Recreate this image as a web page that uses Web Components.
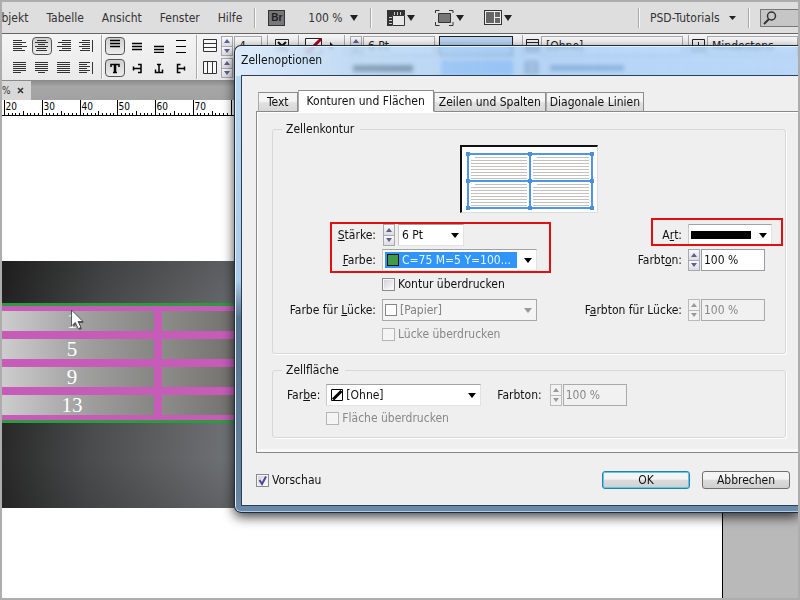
<!DOCTYPE html>
<html lang="de">
<head>
<meta charset="utf-8">
<title>Zellenoptionen</title>
<style>
  html, body { margin: 0; height: 100%; }
  body { font: 12px/16px "DejaVu Sans Condensed", "Noto Sans", sans-serif; color: #111; background: #adadad; }
</style>
</head>
<body>
<app-window></app-window>

<script>
const define = (name, html, setup) => {
  const template = document.createElement('template');
  template.innerHTML = html;
  customElements.define(name, class extends HTMLElement {
    connectedCallback() {
      if (this.shadowRoot) return;
      this.attachShadow({ mode: 'open' }).append(template.content.cloneNode(true));
      if (setup) setup(this, this.shadowRoot);
    }
  });
};

/* ---------- icons ---------- */
const hLines = list => list.map(([x, y, w]) => `<path d="M${x} ${y}.5h${w}" stroke="#333"/>`).join('');
const paragraph = (xs, ws, extra = '') =>
  `<svg width="16" height="14">${hLines(ws.map((w, i) => [xs[i], 1 + i * 2, w]))}${extra}</svg>`;
const edge = '<path d="M14.500 1v12" stroke="#333"/>';
const ICONS = {
  left: paragraph([1, 1, 1, 1, 1, 1], [9, 13, 9, 14, 9, 12]),
  center: paragraph([3, 1, 4, 1, 3, 2], [9, 13, 7, 13, 9, 11]),
  right: paragraph([6, 2, 6, 1, 6, 3], [9, 13, 9, 14, 9, 12]),
  spine: paragraph([4, 1, 4, 1, 4, 2], [8, 11, 8, 11, 8, 10], edge),
  jleft: paragraph([1, 1, 1, 1, 1, 1], [13, 13, 13, 13, 13, 8]),
  jcenter: paragraph([1, 1, 1, 1, 1, 4], [13, 13, 13, 13, 13, 7]),
  jfull: paragraph([1, 1, 1, 1, 1, 1], [13, 13, 13, 13, 13, 13]),
  jspine: paragraph([1, 1, 1, 1, 1, 1], [11, 8, 11, 8, 11, 8], edge),
  top: '<svg width="16" height="14"><path d="M3 1.500h10M3 4.500h10M3 7.500h10" stroke="#000" stroke-width="1.500"/></svg>',
  middle: '<svg width="16" height="14"><path d="M3 4.500h10M3 7.500h10M3 10.500h10" stroke="#000" stroke-width="1.500"/></svg>',
  bottom: '<svg width="16" height="14"><path d="M3 7.500h10M3 10.500h10M3 13.500h10" stroke="#000" stroke-width="1.500"/></svg>',
  spread: '<svg width="16" height="14"><path d="M3 1.500h10M3 7.500h10M3 13.500h10" stroke="#000"/></svg>',
  t0: '<svg width="16" height="14"><path d="M4 6V3.500h8V6M6 11.500h4" fill="none" stroke="#000" stroke-width="1.500"/><path d="M8 3v9" stroke="#000" stroke-width="2.500"/></svg>',
  t90: '<svg width="16" height="14"><path d="M4 7.500h8M9 3.500h3v8h-3M4.500 5.500v4" fill="none" stroke="#000" stroke-width="1.500"/></svg>',
  t180: '<svg width="16" height="14"><path d="M8 3v8M4.500 8.500v3h7v-3M6 3.500h4" fill="none" stroke="#000" stroke-width="1.500"/></svg>',
  t270: '<svg width="16" height="14"><path d="M4 7.500h8M7.500 3.500h-3v8h3M11.500 5.500v4" fill="none" stroke="#000" stroke-width="1.500"/></svg>',
  rows: '<svg width="16" height="14"><path d="M1.500 .500h13v12h-13zM1.500 4.500h13M1.500 8.500h13" fill="#f8f8f8" stroke="#333"/></svg>',
  cols: '<svg width="16" height="14"><path d="M1.500 .500h13v12h-13zM5.500 .500v12M10.500 .500v12" fill="#f8f8f8" stroke="#333"/></svg>',
  cross: '<svg width="16" height="14"><path d="M1.500 .500h13v12h-13z" fill="#f8f8f8" stroke="#222"/><path d="M4 3l8 8M12 3l-8 8" stroke="#111" stroke-width="2"/></svg>',
  none: '<svg width="17" height="16"><path d="M.500 .500h16v15h-16z" fill="#fff" stroke="#222"/><path d="M2 15 16 1" stroke="#b00020" stroke-width="3"/></svg>',
  play: '<svg width="5" height="8"><path d="M0 0l4 4-4 4z" fill="#111"/></svg>',
  lines: '<svg width="13" height="14"><path d="M.500 .500h12v12h-12zM.500 3.500h12M.500 6.500h12M.500 9.500h12" fill="none" stroke="#222"/></svg>',
  inset: '<svg width="13" height="14"><path d="M.500 .500h12v12h-12zM3 6.500h8M6.500 3v8" fill="none" stroke="#222"/></svg>',
  caret: '<svg width="8" height="6"><path d="M0 0h8L4 6z" fill="#222"/></svg>',
  smallcaret: '<svg width="7" height="4"><path d="M0 0h7L3.500 4z" fill="#222"/></svg>',
  ruler: '<svg width="18" height="16"><path d="M0 0h18v5H5v11H0z" fill="#333"/><path d="M7.500 2v3M10.500 2v3M13.500 2v3M2 7.500h3M2 10.500h3M2 13.500h3" stroke="#ccc"/><path d="M5.500 5.500h12v10h-12z" fill="#e8e8e8" stroke="#333"/></svg>',
  screen: '<svg width="19" height="16"><path d="M.500 3V.500h4M14 .500h4V3M.500 12v3.500h4M14 15.500h4V12" fill="none" stroke="#333"/><path d="M3.500 3.500h12v9h-12z" fill="#777" stroke="#333"/></svg>',
  arrange: '<svg width="18" height="15"><path d="M0 0h18v15H0z" fill="#333"/><path d="M1 1h16v13H1z" fill="#eee"/><path d="M2 2h8v11H2zM11 2h5v5h-5zM11 8h5v5h-5z" fill="#666"/></svg>',
  search: '<svg width="14" height="14"><circle cx="8.500" cy="5" r="4" fill="none" stroke="#333" stroke-width="1.500"/><path d="M6 8l-5 5" stroke="#333" stroke-width="2"/></svg>',
  cursor: '<svg width="16" height="22"><path d="M3 3v15l3.500-3 3 6 2.500-1-3-6h5z" fill="#000" opacity=".45"/><path d="M1.500 1v16l3.800-3.500 3 6.200 2.700-1.300-3-5.900h5z" fill="#fff" stroke="#333" stroke-width=".800"/></svg>',
  preview: (() => {
    let rows = '';
    for (const x of [9, 71]) for (const y of [10, 37])
      for (let i = 0; i < 8; i++) rows += `<path d="M${x + (i ? 0 : 4)} ${y + .5 + i * 3}h${i ? 56 : 52}" stroke="#c4c0c0"/>`;
    let dots = '';
    for (const x of [4, 66, 128]) for (const y of [5, 32, 59]) dots += `<path d="M${x} ${y}h4v4h-4z" fill="#4a8fdc"/>`;
    return `<svg width="135" height="65">${rows}<path d="M6 7h124v54H6zM6 34h124M68 7v54" fill="none" stroke="#4f97e6" stroke-width="2"/>${dots}</svg>`;
  })()
};

define('ui-icon', `<style>:host{display:inline-flex;flex:none}svg{display:block}</style>`, (el, root) => {
  root.innerHTML += ICONS[el.getAttribute('name')];
});

/* ---------- small controls ---------- */
define('ui-separator', `<style>:host{display:block;flex:none;width:1px;height:20px;background:#a9a9a9;box-shadow:1px 0 #fafafa}</style>`);

define('tool-button', `<style>
  :host{display:block;flex:none}
  button{display:grid;place-items:center;box-sizing:border-box;width:20px;height:18px;padding:0;border:1px solid transparent;border-radius:4px;background:none}
  :host([pressed]) button{border-color:#555;background:linear-gradient(#cfcfcf,#ececec)}
  </style><button type="button"><slot></slot></button>`, (el, root) => {
  const button = root.querySelector('button');
  button.setAttribute('aria-label', el.getAttribute('label'));
  button.setAttribute('aria-pressed', el.hasAttribute('pressed'));
});

define('ui-spinner', `<style>
  :host{display:flex;flex-direction:column;flex:none;width:12px;height:22px}
  button{flex:1;display:grid;place-items:center;min-height:0;padding:0;border:1px solid #a8a8b0;background:linear-gradient(#fafafa,#dcdce2)}
  button+button{border-top:0}
  path{fill:#5c5f96}
  :host([disabled]) path{fill:#999}
  :host([disabled]) button{background:#f2f2f2;border-color:#bbb}
  </style>
  <button type="button" aria-label="Erhöhen"><svg width="6" height="4"><path d="M0 4 3 0l3 4z"/></svg></button>
  <button type="button" aria-label="Verringern"><svg width="6" height="4"><path d="M0 0h6L3 4z"/></svg></button>`, (el, root) => {
  if (el.hasAttribute('disabled')) root.querySelectorAll('button').forEach(b => b.disabled = true);
});

define('ui-select', `<style>
  :host{display:flex;box-sizing:border-box;height:22px;background:#fff;border:1px solid #e2e2e2;border-top-color:#a2a2a2;border-left-color:#c8c8c8;align-items:center;padding:0 4px 0 2px}
  .value{flex:1;min-width:0;display:flex;align-items:center;gap:2px;height:16px;margin-right:7px}
  select{appearance:none;flex:1;min-width:0;height:16px;padding:0 1px;border:0;margin:0;background:none;color:inherit;font:inherit;opacity:1}
  ::slotted(*){flex:none}
  svg{flex:none;pointer-events:none}
  path{fill:#000}
  :host([highlight]) .value{background:#2f95fb;color:#e8f6ff;padding-left:2px}
  :host([disabled]){background:#f4f4f4;color:#808080;border-color:#a8a8a8}
  :host([disabled]) path{fill:#999}
  </style>
  <span class="value"><slot name="swatch"></slot><select></select></span><svg width="8" height="5"><path d="M0 0h8L4 5z"/></svg>`, (el, root) => {
  const select = root.querySelector('select');
  select.setAttribute('aria-label', el.getAttribute('label'));
  select.append(new Option(el.getAttribute('value') || ''));
  select.disabled = el.hasAttribute('disabled');
});

define('ui-number', `<style>
  :host{display:flex;gap:1px}
  input{box-sizing:border-box;flex:1;width:0;min-width:0;height:22px;border:1px solid #9a9aa0;padding:0 2px;margin:0;font:inherit;color:inherit;background:#fff}
  :host([disabled]) input{background:#f1f1f1;color:#888;border-color:#aaa}
  </style><ui-spinner></ui-spinner><input type="text">`, (el, root) => {
  const input = root.querySelector('input');
  input.value = el.getAttribute('value');
  input.setAttribute('aria-label', el.getAttribute('label'));
  if (el.hasAttribute('disabled')) {
    input.disabled = true;
    root.querySelector('ui-spinner').setAttribute('disabled', '');
  }
});

define('ui-check', `<style>
  :host{display:block}
  label{display:flex;align-items:center;gap:3px;height:20px;white-space:nowrap}
  input{appearance:none;flex:none;box-sizing:border-box;width:13px;height:13px;margin:0;border:1px solid #8a8a8e;background:linear-gradient(135deg,#cfcfd4,#fff);box-shadow:inset 0 0 0 1px #f6f6f6}
  input:disabled{border-color:#b4b4b4;background:#f4f4f4}
  .box{display:grid}
  .box>*{grid-area:1/1}
  svg{display:none;pointer-events:none}
  :host([checked]) svg{display:block}
  :host([disabled]){color:#888}
  </style><label><span class="box"><input type="checkbox"><svg width="13" height="13"><path d="M3.500 6l2.500 4 4-7.500" fill="none" stroke="#4a4a9c" stroke-width="2"/></svg></span><span><slot></slot></span></label>`, (el, root) => {
  const input = root.querySelector('input');
  input.checked = el.hasAttribute('checked');
  input.disabled = el.hasAttribute('disabled');
});

define('ui-button', `<style>
  :host{display:block;width:88px}
  button{display:block;box-sizing:border-box;width:100%;height:18px;padding:0;border:1px solid #707070;border-radius:3px;font:inherit;line-height:16px;color:#111;background:linear-gradient(#f4f4f4 45%,#dcdcdc 50%,#d0d0d0)}
  :host([primary]) button{border-color:#2c7fa5;box-shadow:inset 0 0 0 1px #5cc8ec}
  </style><button type="button"><slot></slot></button>`);

define('ui-group', `<style>
  :host{display:block}
  fieldset{position:relative;margin:0;min-width:0;border:1px solid #d8d8d8;border-radius:3px;box-shadow:1px 1px #fff;padding:0 14px 9px 14px}
  legend{padding:0 6px 0 4px;margin-left:-5px;line-height:16px}
  </style><fieldset><legend></legend><slot></slot></fieldset>`, (el, root) => {
  root.querySelector('legend').textContent = el.getAttribute('label');
});

/* ---------- application bars ---------- */
define('menu-bar', `<style>
  :host{display:flex;align-items:center;height:31px;background:#dedede;border-bottom:1px solid #666;color:#333;white-space:nowrap;overflow:hidden}
  nav{display:flex;gap:18px;margin-left:-9px}
  a{color:inherit;text-decoration:none}
  ui-separator{margin:0 11px 0 12px}
  .bridge{box-sizing:border-box;width:17px;height:16px;margin-left:2px;padding:0;border:1px solid #333;background:#777;color:#222;font:bold 10px/12px "Liberation Sans",sans-serif}
  .drop{display:flex;align-items:center;gap:2px;padding:0;border:0;background:none;margin:0 20px 0 0;color:inherit;font:inherit}
  .drop.zoom{justify-content:space-between;margin:0 0 0 23px;width:50px}
  .drop.tools{margin-left:5px}
  .grow{flex:1}
  .drop.work{justify-content:space-between;width:86px;margin:0}
  .search{display:flex;align-items:center;box-sizing:border-box;width:38px;height:18px;border:1px solid #777;border-right:0;background:#c6c6c6;padding-left:2px}
  input{flex:1;width:0;min-width:0;border:0;padding:0;background:none}
  </style>
  <nav><a href="#">Objekt</a><a href="#">Tabelle</a><a href="#">Ansicht</a><a href="#">Fenster</a><a href="#">Hilfe</a></nav>
  <ui-separator></ui-separator>
  <button class="bridge" type="button">Br</button>
  <button class="drop zoom" type="button">100 % <ui-icon name="caret"></ui-icon></button>
  <ui-separator></ui-separator>
  <button class="drop tools" type="button" aria-label="Anzeigeoptionen"><ui-icon name="ruler"></ui-icon><ui-icon name="caret"></ui-icon></button>
  <button class="drop" type="button" aria-label="Bildschirmmodus"><ui-icon name="screen"></ui-icon><ui-icon name="caret"></ui-icon></button>
  <button class="drop" type="button" aria-label="Dokumente anordnen"><ui-icon name="arrange"></ui-icon><ui-icon name="caret"></ui-icon></button>
  <span class="grow"></span>
  <ui-separator></ui-separator>
  <button class="drop work" type="button">PSD-Tutorials <ui-icon name="smallcaret"></ui-icon></button>
  <ui-separator></ui-separator>
  <label class="search"><ui-icon name="search"></ui-icon><input type="search" aria-label="Suche"></label>`);

define('control-bar', `<style>
  :host{display:grid;grid-template-rows:22px 22px;align-content:center;height:46px;background:linear-gradient(#f4f4f4,#eaeaea);border-bottom:1px solid #8a8a8a;overflow:hidden}
  .row{display:flex;align-items:center;gap:2px;padding-left:8px;white-space:nowrap;color:#222}
  ui-separator{height:22px;margin:0 1px 0 3px}
  .field{box-sizing:border-box;height:20px;border:1px solid #aaa;background:#f6f6f6;padding:1px 4px;flex:none}
  .w28{width:28px}.w72{width:72px}.w142{width:142px}.grow{flex:1}
  .table{box-sizing:border-box;width:74px;height:20px;border:1px solid #222;background:#bcd6f4;flex:none;margin:0 4px 0 2px}
  .gap{margin:0 3px}
  .wide{margin:0 4px}
  .row>ui-spinner{height:20px;margin:0 -1px}
  .bar{width:60px;height:7px;background:#111;margin-left:89px;flex:none}
  .chip{width:72px;height:16px;background:#8ab4ee;margin-left:26px;flex:none}
  .dim{width:74px;height:6px;background:#5f7f9f;flex:none;margin-left:10px}
  .shift{margin-left:10px}
  </style>
  <div class="row">
    <tool-button label="Linksbündig"><ui-icon name="left"></ui-icon></tool-button>
    <tool-button label="Zentriert" pressed><ui-icon name="center"></ui-icon></tool-button>
    <tool-button label="Rechtsbündig"><ui-icon name="right"></ui-icon></tool-button>
    <tool-button label="Am Rücken ausrichten"><ui-icon name="spine"></ui-icon></tool-button>
    <ui-separator></ui-separator>
    <tool-button label="Oben" pressed><ui-icon name="top"></ui-icon></tool-button>
    <tool-button label="Mitte"><ui-icon name="middle"></ui-icon></tool-button>
    <tool-button label="Unten"><ui-icon name="bottom"></ui-icon></tool-button>
    <tool-button label="Blocksatz vertikal"><ui-icon name="spread"></ui-icon></tool-button>
    <ui-separator></ui-separator>
    <tool-button label="Zeilen"><ui-icon name="rows"></ui-icon></tool-button>
    <ui-spinner></ui-spinner>
    <span class="field w28">4</span>
    <ui-separator></ui-separator>
    <ui-icon class="gap" name="cross"></ui-icon>
    <ui-separator></ui-separator>
    <ui-icon class="gap" name="none"></ui-icon>
    <ui-icon class="gap" name="play"></ui-icon>
    <ui-separator class="wide"></ui-separator>
    <ui-spinner></ui-spinner>
    <span class="field w72">6 Pt</span>
    <span class="table"></span>
    <ui-separator></ui-separator>
    <ui-icon name="lines"></ui-icon>
    <span class="field w142">[Ohne]</span>
    <ui-separator></ui-separator>
    <ui-icon name="inset"></ui-icon>
    <span class="field grow">Mindestens</span>
  </div>
  <div class="row">
    <tool-button label="Blocksatz, letzte links"><ui-icon name="jleft"></ui-icon></tool-button>
    <tool-button label="Blocksatz, letzte zentriert"><ui-icon name="jcenter"></ui-icon></tool-button>
    <tool-button label="Blocksatz"><ui-icon name="jfull"></ui-icon></tool-button>
    <tool-button label="Vom Rücken weg"><ui-icon name="jspine"></ui-icon></tool-button>
    <ui-separator></ui-separator>
    <tool-button label="Text 0 Grad" pressed><ui-icon name="t0"></ui-icon></tool-button>
    <tool-button label="Text 90 Grad"><ui-icon name="t90"></ui-icon></tool-button>
    <tool-button label="Text 180 Grad"><ui-icon name="t180"></ui-icon></tool-button>
    <tool-button label="Text 270 Grad"><ui-icon name="t270"></ui-icon></tool-button>
    <ui-separator></ui-separator>
    <tool-button label="Spalten"><ui-icon name="cols"></ui-icon></tool-button>
    <ui-spinner></ui-spinner>
    <span class="field w28"></span>
    <span class="bar"></span>
    <span class="chip"></span>
    <ui-icon class="shift" name="lines"></ui-icon>
    <span class="dim"></span>
  </div>`);

define('document-tabs', `<style>
  :host{display:flex;height:19px;background:linear-gradient(#8e8e8e,#a6a6a6 30%,#a2a2a2)}
  .tab{display:flex;align-items:center;gap:6px;width:29px;box-sizing:border-box;background:#d8d8d8;color:#333;font-size:10px}
  button{border:0;padding:0;background:none;display:flex}
  </style><div class="tab"><span>%</span><button type="button" aria-label="Schließen"><svg width="7" height="7"><path d="M1 1l5 5M6 1 1 6" stroke="#333" stroke-width="1.500"/></svg></button></div>`);

define('ruler-strip', `<style>
  :host{display:block;height:17px;background:#fff;overflow:hidden}
  svg{display:block;width:100%;height:17px}
  text{font:10px "DejaVu Sans Condensed",sans-serif;fill:#000}
  </style><svg></svg>`, (el, root) => {
  let marks = '<path d="M0 15.500h796" stroke="#000"/>';
  for (let i = 0; i < 61; i++) {
    const x = Math.round(2 + i * 3.775) + .5;
    marks += `<path d="M${x} ${i % 10 ? (i % 5 ? 13 : 11) : 0}V16" stroke="#000"/>`;
    if (i % 10 === 0 && i < 60) marks += `<text x="${x + 1}" y="10">${20 + i}</text>`;
  }
  root.querySelector('svg').innerHTML = marks;
});

/* ---------- document page ---------- */
define('cell-table', `<style>
  :host{display:block;box-sizing:border-box;border:solid #2f9a40;border-width:3px 0;background:#c65cb8;padding:5px 0;overflow:hidden}
  table{border-spacing:0;width:100%;table-layout:fixed}
  td{height:20px;padding:0 12px 0 0;border-right:8px solid #c65cb8;border-bottom:8px solid #c65cb8;background:linear-gradient(90deg,#8c8c88,#74726e 25%,#555) padding-box;font:21px/20px "Liberation Serif",serif;text-align:center;color:#fff}
  td:first-child{width:140px;background:linear-gradient(90deg,#cdcdcd,#a2a3a2 50%,#868782) padding-box}
  tr:last-child td{border-bottom:0}
  </style><table><tbody>
  <tr><td>1</td><td></td><td></td></tr><tr><td>5</td><td></td><td></td></tr><tr><td>9</td><td></td><td></td></tr><tr><td>13</td><td></td><td></td></tr>
  </tbody></table>`);

define('document-canvas', `<style>
  :host{position:relative;display:flex;flex:1;min-height:0;background:#b9b9b9}
  .page{flex:1;background:#fff;border-right:1px solid #000;padding-top:144px}
  .band{box-sizing:border-box;padding:42px 0 85px;background:linear-gradient(#0002,#0000 30%,#0000 80%,#0002),linear-gradient(95deg,#222,#4a4b4c 14%,#6d7072 32%,#777)}
  .desk{width:75px}
  .cursor{position:absolute;left:68px;top:192px}
  </style><div class="page"><div class="band"><cell-table></cell-table></div></div><div class="desk"></div><ui-icon class="cursor" name="cursor"></ui-icon>`);

/* ---------- dialog ---------- */
define('tab-strip', `<style>
  :host{display:flex;align-items:flex-end;padding-left:2px;margin-bottom:-1px;position:relative;height:22px}
  button{box-sizing:border-box;height:20px;padding:1px 4px;margin:0;border:1px solid #8c8c8c;border-left-color:#aaa;border-bottom-color:#888;background:linear-gradient(#f4f4f4 45%,#e0e0e0 55%,#d8d8d8);font:inherit;color:#111;white-space:nowrap}
  button:first-of-type{padding:1px 8px}
  button:last-of-type{padding:1px 3px}
  button[aria-selected=true]{height:22px;padding:0 8px 1px;border-bottom-color:#fff;background:#fff}
  </style>
  <button type="button" role="tab">Text</button><button type="button" role="tab" aria-selected="true">Konturen und Flächen</button><button type="button" role="tab">Zeilen und Spalten</button><button type="button" role="tab">Diagonale Linien</button>`,
  el => el.setAttribute('role', 'tablist'));

define('stroke-group', `<style>
  :host{display:block}
  .preview{display:flex;width:max-content;margin:8px auto 0;border:2px solid #111;border-right:1px solid #ddd;border-bottom:1px solid #ddd;background:#fff}
  .grid{display:grid;grid-template-columns:89px 155px 1fr auto 77px;grid-template-rows:22px 22px 22px 22px 20px;gap:3px 6px;padding:11px 6px 0 0}
  .label{text-align:right;line-height:22px;white-space:nowrap}
  .left{grid-column:1}
  .mid{grid-column:2}
  .rl{grid-column:4}
  .r{grid-column:5}
  .art{margin-right:-7px}
  .row{display:flex;gap:3px;padding-left:1px}
  .row ui-select{width:66px}
  .swatch{box-sizing:border-box;width:12px;height:12px;border:1px solid #111;background:#3f9a4c}
  .swatch.paper{background:#fff;border-color:#888}
  .line{width:60px;height:8px;background:#000}
  ui-check{align-self:start}
  .mark{position:absolute;box-sizing:border-box;border:2px solid #e01010;pointer-events:none}
  .m1{left:57px;top:85px;width:221px;height:51px}
  .m2{right:2px;top:81px;width:132px;height:28px}
  </style>
  <ui-group label="Zellenkontur">
    <div class="preview"><ui-icon name="preview"></ui-icon></div>
    <div class="grid">
      <span class="label left"><u>S</u>tärke:</span>
      <div class="mid row"><ui-spinner></ui-spinner><ui-select label="Stärke" value="6 Pt"></ui-select></div>
      <span class="label rl">A<u>r</u>t:</span>
      <ui-select class="r art" label="Art"><span slot="swatch" class="line"></span></ui-select>
      <span class="label left"><u>F</u>arbe:</span>
      <ui-select class="mid" label="Farbe" highlight value="C=75 M=5 Y=100..."><span slot="swatch" class="swatch"></span></ui-select>
      <span class="label rl">Farbt<u>o</u>n:</span>
      <ui-number class="r" label="Farbton" value="100 %"></ui-number>
      <ui-check class="mid">Kontur überdrucken</ui-check>
      <span class="label left">Farbe für <u>L</u>ücke:</span>
      <ui-select class="mid" label="Farbe für Lücke" disabled value="[Papier]"><span slot="swatch" class="swatch paper"></span></ui-select>
      <span class="label rl">F<u>a</u>rbton für Lücke:</span>
      <ui-number class="r" label="Farbton für Lücke" value="100 %" disabled></ui-number>
      <ui-check class="mid" disabled>Lücke überdrucken</ui-check>
    </div>
    <span class="mark m1"></span><span class="mark m2"></span>
  </ui-group>`);

define('fill-group', `<style>
  :host{display:block}
  .grid{display:grid;grid-template-columns:auto 155px auto 77px;grid-template-rows:22px 20px;gap:2px 6px;padding-top:6px;justify-content:start}
  .label{line-height:22px;white-space:nowrap}
  .tint{margin:0 2px 0 10px}
  ui-check{grid-column:2}
  </style>
  <ui-group label="Zellfläche">
    <div class="grid">
      <span class="label">Far<u>b</u>e:</span>
      <ui-select label="Farbe" value="[Ohne]"><svg slot="swatch" width="14" height="12"><path d="M2.500 .500h11v11h-11z" fill="#fff" stroke="#000"/><path d="M4 10.500 12.500 2" stroke="#000" stroke-width="3"/></svg></ui-select>
      <span class="label tint">Farbton:</span>
      <ui-number label="Farbton" value="100 %" disabled></ui-number>
      <ui-check disabled>Fläche überdrucken</ui-check>
    </div>
  </ui-group>`);

define('options-dialog', `<style>
  :host{position:absolute;left:232px;right:-1px;top:43px;display:flex;flex-direction:column;box-sizing:border-box;border:1px solid #1e2c3e;border-right:0;border-radius:7px 0 0 7px;
    backdrop-filter:blur(2px);
    background:linear-gradient(90deg,#dcebfbf0 0,#b4d5f6c0 20%,#9cc9f8b0 50%,#a9d0fbc0 100%) 0 0/100% 30px no-repeat,linear-gradient(#b8d8f2,#a9cbe9 44%,#57738f 52%,#6583a0 90%,#7d9dbd) 0 30px/100% 100% no-repeat;
    box-shadow:inset 1px 1px #e4f2ff,inset 0 -1px #a9cdf0,0 4px 12px #000b;padding:0 0 6px 6px}
  header{height:29px}
  h1{margin:0;font:inherit;line-height:28px}
  main{border:1px solid #2c3f56;border-right:0;background:#efefef;padding:14px 0 15px 14px}
  .panel{border:1px solid #888;border-right:0;box-shadow:inset 1px 1px #fff,inset 0 -3px #f8f8f8;padding:9px 13px 14px 15px}
  fill-group{margin-top:8px}
  footer{display:flex;align-items:center;gap:12px;padding:17px 9px 0 0}
  ui-check{flex:1}
  </style>
  <header><h1>Zellenoptionen</h1></header>
  <main>
    <tab-strip></tab-strip>
    <div class="panel"><stroke-group></stroke-group><fill-group></fill-group></div>
    <footer><ui-check checked>Vorschau</ui-check><ui-button primary>OK</ui-button><ui-button>Abbrechen</ui-button></footer>
  </main>`, el => { el.setAttribute('role', 'dialog'); el.setAttribute('aria-label', 'Zellenoptionen'); });

define('app-window', `<style>
  :host{position:relative;display:flex;flex-direction:column;box-sizing:border-box;height:100vh;border:2px solid #adadad;overflow:hidden}
  </style><menu-bar></menu-bar><control-bar></control-bar><document-tabs></document-tabs><ruler-strip></ruler-strip><document-canvas></document-canvas><options-dialog></options-dialog>`);
</script>
</body>
</html>
